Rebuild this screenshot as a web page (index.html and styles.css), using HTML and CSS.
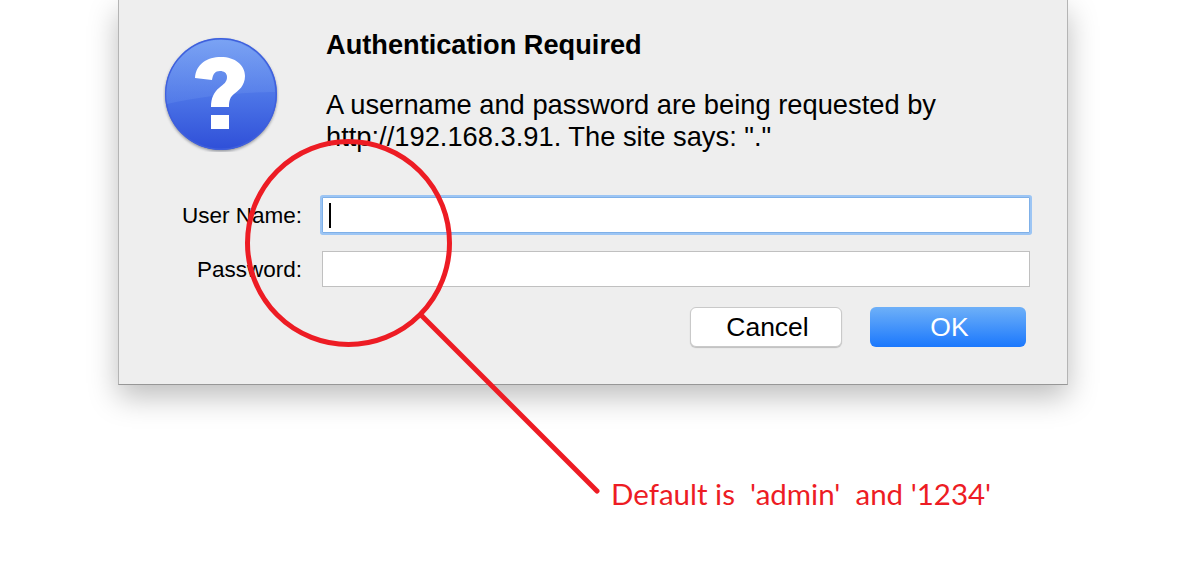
FILE: index.html
```html
<!DOCTYPE html>
<html lang="en">
<head>
    <meta charset="UTF-8">
    <meta name="viewport" content="width=device-width, initial-scale=1.0">
    <title>Authentication Required</title>
    <link rel="stylesheet" href="styles.css">
</head>
<body>

<div class="dialog">
    <div class="top">
        <svg class="icon" width="116" height="116" viewBox="0 0 116 116">
            <defs>
                <linearGradient id="ball" x1="0" y1="0" x2="0" y2="1">
                    <stop offset="0" stop-color="#6f9bf2"/>
                    <stop offset="0.55" stop-color="#4a72e6"/>
                    <stop offset="1" stop-color="#2f4fd8"/>
                </linearGradient>
                <linearGradient id="shine" x1="0" y1="0" x2="0" y2="1">
                    <stop offset="0" stop-color="#84aaf5"/>
                    <stop offset="1" stop-color="#5a82ea"/>
                </linearGradient>
                <filter id="soft" x="-10%" y="-10%" width="120%" height="120%">
                    <feGaussianBlur stdDeviation="1.5"/>
                </filter>
            </defs>
            <circle cx="58" cy="59.500" r="56" fill="#5a5f6c" opacity="0.65" filter="url(#soft)"/>
            <circle cx="58" cy="58" r="56" fill="url(#ball)"/>
            <circle cx="58" cy="58" r="55.200" fill="none" stroke="#3f5fdc" stroke-width="1.400"/>
            <path d="M4 68 A54.500 54.500 0 0 1 58 4 A54.500 54.500 0 0 1 112 56 C82 56 36 60 4 68 Z" fill="url(#shine)" opacity="0.55"/>
            <path d="M32 42 C33 28 44 21 58 21 C72 21 82 29 82 40 C82 50 75 55 71 58 C67 61 66 65 66 71 H48 C48 62 51 56 56 52 C61 48 64 46 64 41 C64 37 61 35 57 35 C52 35 50 38 49 44 Z" fill="#fff"/>
            <rect x="48" y="79" width="18" height="14" fill="#fff"/>
        </svg>
        <div class="text">
            <h1>Authentication Required</h1>
            <p>A username and password are being requested by http://192.168.3.91. The site says: "."</p>
        </div>
    </div>

    <div class="row">
        <label class="label">User Name:</label>
        <div class="field focused"><span class="caret"></span></div>
    </div>
    <div class="row">
        <label class="label">Password:</label>
        <div class="field"></div>
    </div>

    <div class="buttons">
        <button class="button cancel">Cancel</button>
        <button class="button ok">OK</button>
    </div>
</div>

<div class="note">Default is &nbsp;'admin' &nbsp;and '1234'</div>

<!-- red marker drawn on top of the dialog -->
<svg class="marker" width="1179" height="575" viewBox="0 0 1179 575">
    <ellipse cx="348.500" cy="243" rx="101" ry="101.500" fill="none" stroke="#ed1c24" stroke-width="5"/>
    <line x1="422" y1="316" x2="597" y2="491" stroke="#ed1c24" stroke-width="5" stroke-linecap="round"/>
</svg>

</body>
</html>
```

FILE: styles.css
```css
body {
    font-family: "Liberation Sans", Arial, sans-serif;
    background-color: #fff;
    margin: 0;
    height: 575px;
    overflow: hidden;
    color: #000;
}
.dialog {
    box-sizing: border-box;
    width: 950px;
    height: 385px;
    margin-left: 118px;
    padding-top: 29px;
    background-color: #eeeeee;
    border: 1px solid #b4b4b4;
    border-top: none;
    border-bottom-color: #979797;
    box-shadow: 0 12px 28px rgba(0, 0, 0, 0.26);
}
.top {
    display: flex;
    height: 168px;
}
.icon {
    margin: 7px 0 0 44px;
    flex-shrink: 0;
}
.text {
    margin: 1px 0 0 47px;
    width: 660px;
}
h1 {
    font-size: 27.200px;
    line-height: 30px;
    font-weight: bold;
    margin: 0 0 29px 0;
}
p {
    font-size: 27.300px;
    line-height: 32px;
    margin: 0;
}
.row {
    display: flex;
    align-items: center;
    height: 36px;
    margin-bottom: 18px;
}
.label {
    width: 183px;
    padding-top: 2px;
    text-align: right;
    font-size: 22.500px;
}
.field {
    box-sizing: border-box;
    width: 708px;
    height: 36px;
    margin-left: 20px;
    background-color: #fff;
    border: 1px solid #c0c0c0;
    display: flex;
    align-items: center;
    padding-left: 6px;
}
.field.focused {
    border: 1px solid #7fb0e8;
    box-shadow: 0 0 0 2px #9cc5f4;
    border-radius: 1px;
}
.caret {
    width: 2px;
    height: 25px;
    background-color: #000;
}
.buttons {
    display: flex;
    justify-content: flex-end;
    gap: 28px;
    padding-top: 2px;
    padding-right: 41px;
    margin-top: 2px;
}
.button {
    font-family: "Liberation Sans", Arial, sans-serif;
    font-size: 26.500px;
    height: 40px;
    padding: 0 0 0 3px;
    border-radius: 6px;
    cursor: pointer;
}
.cancel {
    width: 152px;
    background-color: #fff;
    color: #000;
    border: 1px solid #c9c9c9;
    box-shadow: 0 1px 1px rgba(0, 0, 0, 0.2);
}
.ok {
    width: 156px;
    color: #fff;
    border: none;
    background: linear-gradient(#6eb0f8, #1b78fd);
}
.note {
    font-family: Lato, sans-serif;
    font-size: 29.500px;
    line-height: 34px;
    color: #ed1c24;
    margin: 92px 0 0 611px;
    white-space: nowrap;
}
.marker {
    position: absolute;
    left: 0;
    top: 0;
    pointer-events: none;
}
```
